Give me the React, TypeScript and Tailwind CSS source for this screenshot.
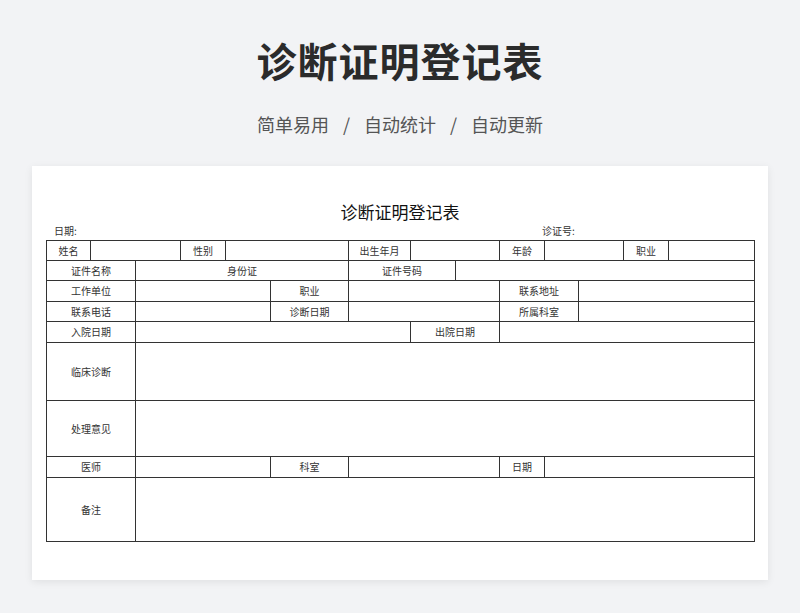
const widths = [44, 45, 45, 45, 45, 78, 62, 45, 44, 45, 34, 45, 45, 86]

type Cell = [string, number]
const rows: { h: number; cells: Cell[] }[] = [
  { h: 20, cells: [['姓名', 1], ['', 2], ['性别', 1], ['', 2], ['出生年月', 1], ['', 2], ['年龄', 1], ['', 2], ['职业', 1], ['', 1]] },
  { h: 20, cells: [['证件名称', 2], ['身份证', 4], ['证件号码', 2], ['', 6]] },
  { h: 21, cells: [['工作单位', 2], ['', 3], ['职业', 1], ['', 3], ['联系地址', 2], ['', 3]] },
  { h: 20, cells: [['联系电话', 2], ['', 3], ['诊断日期', 1], ['', 3], ['所属科室', 2], ['', 3]] },
  { h: 21, cells: [['入院日期', 2], ['', 5], ['出院日期', 2], ['', 5]] },
  { h: 58, cells: [['临床诊断', 2], ['', 12]] },
  { h: 56, cells: [['处理意见', 2], ['', 12]] },
  { h: 21, cells: [['医师', 2], ['', 3], ['科室', 1], ['', 3], ['日期', 1], ['', 4]] },
  { h: 64, cells: [['备注', 2], ['', 12]] },
]

export default function App() {
  return (
    <div
      className="w-[800px] h-[613px] bg-[#f2f3f5] flex flex-col items-center overflow-hidden"
      style={{ fontFamily: '"Noto Sans CJK SC", "Noto Sans", sans-serif' }}
    >
      <h1 className="mt-[32px] text-[40px] leading-[56px] font-bold text-[#2b2b2b] tracking-[1px]">诊断证明登记表</h1>
      <div className="mt-[23px] text-[18px] leading-[26px] text-[#555] flex gap-[14px]">
        <span>简单易用</span><span>/</span><span>自动统计</span><span>/</span><span>自动更新</span>
      </div>
      <div className="mt-[29px] w-[736px] h-[414px] bg-white shadow-[0_2px_8px_rgba(0,0,0,0.08)] px-[14px] flex flex-col">
        <div className="mt-[34px] text-center text-[17px] leading-[24px] text-[#111]">诊断证明登记表</div>
        <div className="relative h-[16px] text-[10px] leading-[14px] text-[#333]">
          <span className="absolute left-[8px] top-0">日期:</span>
          <span className="absolute left-[496px] top-0">诊证号:</span>
        </div>
        <table className="table-fixed border-collapse w-[708px] text-[10px] text-[#333]">
          <colgroup>
            {widths.map((w, i) => <col key={i} style={{ width: w }} />)}
          </colgroup>
          <tbody>
            {rows.map((r, i) => (
              <tr key={i} style={{ height: r.h }}>
                {r.cells.map(([t, s], j) => (
                  <td key={j} colSpan={s} className="border border-[#333] text-center p-0 leading-[12px]">{t}</td>
                ))}
              </tr>
            ))}
          </tbody>
        </table>
      </div>
    </div>
  )
}
